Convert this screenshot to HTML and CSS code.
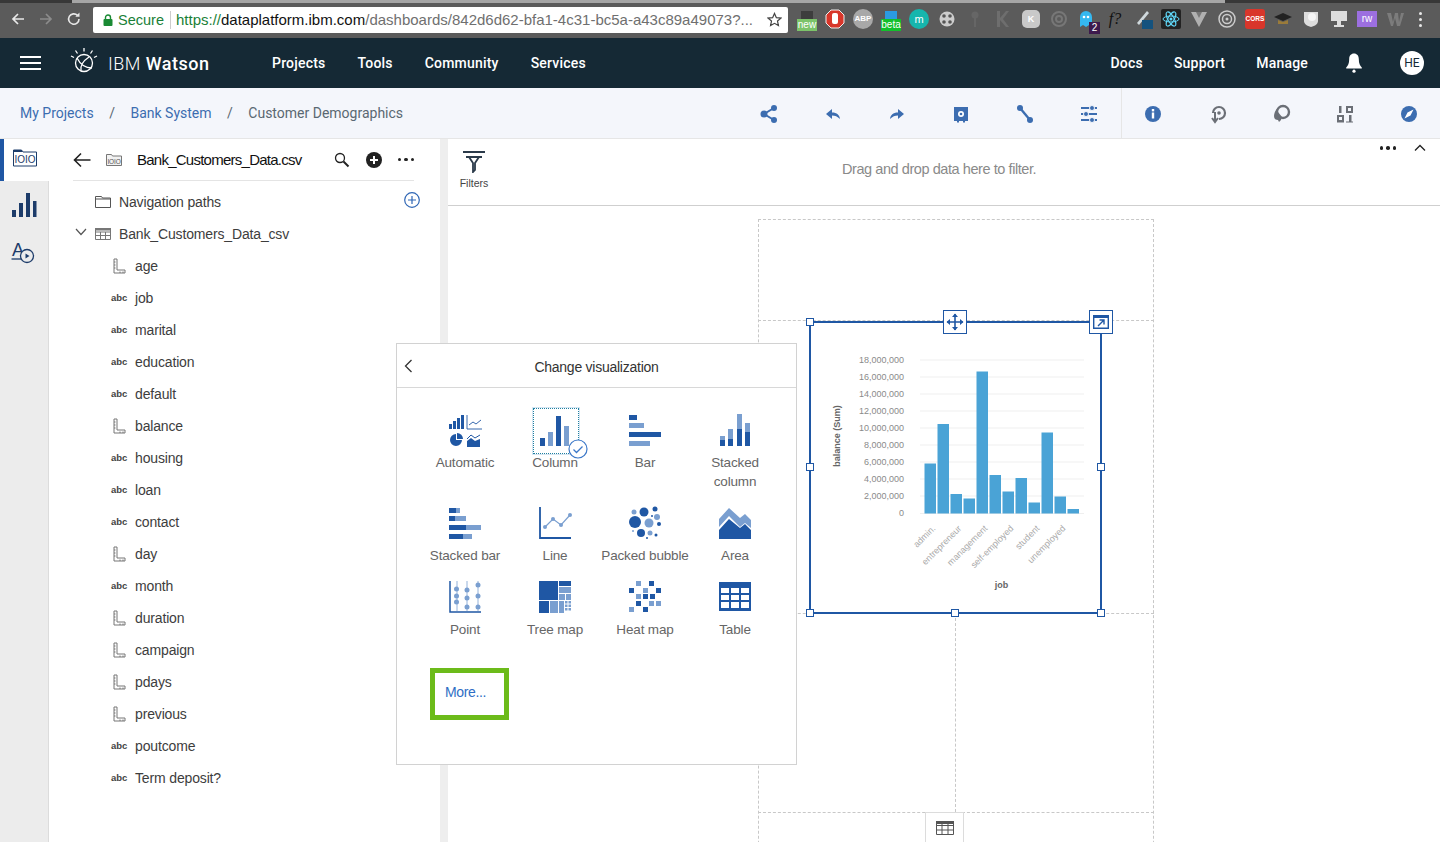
FILE: index.html
```html
<!DOCTYPE html>
<html lang="en">
<head>
    <meta charset="UTF-8">
    <title>Customer Demographics - IBM Watson</title>
    <link rel="stylesheet" href="styles.css">
</head>
<body>
    <svg class="defs" width="0" height="0">
        <symbol id="ruler" viewBox="0 0 14 16">
            <path d="M2 1h3v11h8v3H2z" fill="none" stroke="#777" stroke-width="1"/>
            <path d="M2 4h1.5M2 7h1.5M2 10h1.5M8 15v-1.5M11 15v-1.5" stroke="#777" stroke-width="1"/>
        </symbol>
    </svg>

    <!-- browser chrome -->
    <div class="tabstrip"><div class="tab"></div></div>
    <div class="browser">
        <div class="browser-nav">
            <svg width="16" height="16" viewBox="0 0 16 16"><path d="M14 8H3M8 3 3 8l5 5" fill="none" stroke="#e8e8e8" stroke-width="1.7"/></svg>
            <svg width="16" height="16" viewBox="0 0 16 16"><path d="M2 8h11M8 3l5 5-5 5" fill="none" stroke="#8c8c8c" stroke-width="1.7"/></svg>
            <svg width="16" height="16" viewBox="0 0 16 16"><path d="M13 8a5.2 5.2 0 1 1-1.500-3.600" fill="none" stroke="#e8e8e8" stroke-width="1.6"/><path d="M13.500 1.500v4.200H9.300z" fill="#e8e8e8"/></svg>
        </div>
        <div class="urlbar">
            <svg width="10" height="12" viewBox="0 0 10 12"><rect x="0.5" y="5" width="9" height="7" rx="1" fill="#1a8a34"/><path d="M2.500 5V3.500a2.500 2.500 0 0 1 5 0V5" fill="none" stroke="#1a8a34" stroke-width="1.4"/></svg>
            <span class="secure">Secure</span>
            <span class="url-sep"></span>
            <span class="url"><span class="secure">https://</span><span class="host">dataplatform.ibm.com</span>/dashboards/842d6d62-bfa1-4c31-bc5a-a43c89a49073?...</span>
            <svg class="star" width="15" height="15" viewBox="0 0 16 16"><path d="m8 1.500 2 4.500 4.800.5-3.600 3.200 1 4.800L8 12.100l-4.200 2.400 1-4.800L1.200 6.500 6 6z" fill="none" stroke="#444" stroke-width="1.3"/></svg>
        </div>
        <div class="extensions">
            <span class="ext ext-new">new</span>
            <svg class="ext" viewBox="0 0 20 20"><path d="M6 1h8l5 5v8l-5 5H6l-5-5V6z" fill="#d8362a" stroke="#eee"/><rect x="7" y="4" width="6" height="11" rx="2" fill="#fff"/></svg>
            <span class="ext ext-abp">ABP</span>
            <span class="ext ext-beta">beta</span>
            <span class="ext ext-m">m</span>
            <svg class="ext" viewBox="0 0 20 20"><circle cx="10" cy="10" r="7.5" fill="#ccc"/><circle cx="7" cy="7" r="1.8" fill="#555"/><circle cx="13" cy="7" r="1.8" fill="#555"/><circle cx="7" cy="13" r="1.8" fill="#555"/><circle cx="13" cy="13" r="1.8" fill="#555"/></svg>
            <svg class="ext" viewBox="0 0 20 20"><circle cx="10" cy="6" r="3.5" fill="#666"/><rect x="9" y="8" width="2" height="10" fill="#666"/></svg>
            <svg class="ext" viewBox="0 0 20 20"><path d="M4 2h3v7l6-7h3l-6 8 6 8h-3l-6-7v7H4z" fill="#6e6e6e"/></svg>
            <span class="ext ext-k">K</span>
            <svg class="ext" viewBox="0 0 20 20"><circle cx="10" cy="10" r="7" fill="none" stroke="#777" stroke-width="2"/><circle cx="10" cy="10" r="3" fill="none" stroke="#777" stroke-width="2"/></svg>
            <span class="ext-ghost"><svg class="ext" viewBox="0 0 20 20"><path d="M3 18V8a6 6 0 0 1 12 0v10l-3-2-3 2-3-2z" fill="#35b8f0"/><circle cx="7" cy="8" r="1.3" fill="#fff"/><circle cx="11" cy="8" r="1.3" fill="#fff"/></svg><span class="ghost-count">2</span></span>
            <span class="ext ext-f">f?</span>
            <svg class="ext" viewBox="0 0 20 20"><path d="M14 2 4 14l2 2L16 4z" fill="#cfd8dc"/><rect x="9" y="11" width="11" height="10" fill="#14527e"/></svg>
            <svg class="ext" viewBox="0 0 20 20"><rect width="20" height="20" rx="2" fill="#222"/><g fill="none" stroke="#61dafb"><ellipse cx="10" cy="10" rx="8" ry="3"/><ellipse cx="10" cy="10" rx="8" ry="3" transform="rotate(60 10 10)"/><ellipse cx="10" cy="10" rx="8" ry="3" transform="rotate(120 10 10)"/></g><circle cx="10" cy="10" r="1.5" fill="#61dafb"/></svg>
            <svg class="ext" viewBox="0 0 20 20"><path d="M2 3h16l-8 15z" fill="#b0b0b0"/><path d="M7 3h6l-3 6z" fill="#777"/></svg>
            <svg class="ext" viewBox="0 0 20 20"><circle cx="10" cy="10" r="8" fill="none" stroke="#ccc" stroke-width="1.5"/><circle cx="10" cy="10" r="4.5" fill="none" stroke="#ccc" stroke-width="1.5"/><circle cx="10" cy="10" r="1.5" fill="#ccc"/></svg>
            <span class="ext ext-cors">CORS</span>
            <svg class="ext" viewBox="0 0 20 20"><path d="M1 8l9-4 9 4-9 4z" fill="#222"/><path d="M5 11v4h10v-4l-5 2z" fill="#9a7b3a"/></svg>
            <svg class="ext" viewBox="0 0 20 20"><path d="M3 3h14v9c0 3-3 5-7 6-4-1-7-3-7-6z" fill="#ddd"/><circle cx="11" cy="8" r="4" fill="#f5f5f5"/></svg>
            <svg class="ext" viewBox="0 0 20 20"><rect x="2" y="2" width="16" height="10" fill="#ddd"/><path d="M8 12h4v4h3v2H5v-2h3z" fill="#ddd"/></svg>
            <span class="ext ext-rw">rw</span>
            <svg class="ext" viewBox="0 0 20 20"><path d="M2 4h4l2 9 2-9h3l1 9 2-9h3l-4 13h-3l-2-8-2 8H6z" fill="#7c7c7c"/></svg>
            <span class="chrome-menu"><i></i><i></i><i></i></span>
        </div>
    </div>

    <!-- watson header -->
    <header class="topnav">
        <div class="hamburger"><i></i><i></i><i></i></div>
        <svg class="logo" width="28" height="28" viewBox="0 0 28 28">
            <g fill="none" stroke="#fff" stroke-width="1.3">
                <circle cx="14" cy="16" r="8.5"/>
                <path d="M7 11c3 6 8 10 15 10M11 24c-1-5 2-10 8-14"/>
                <path d="M14 1v3.500M5.500 3.500l2 3M22.500 3.500l-2 3M1 9l3 1.500M27 9l-3 1.500"/>
            </g>
        </svg>
        <div class="brand">IBM <b>Watson</b></div>
        <nav class="nav-main">
            <a>Projects</a>
            <a>Tools</a>
            <a>Community</a>
            <a>Services</a>
        </nav>
        <nav class="nav-right">
            <a>Docs</a>
            <a>Support</a>
            <a>Manage</a>
        </nav>
        <svg class="bell" width="16" height="20" viewBox="0 0 16 20"><path d="M8 .5c-3 0-4.800 2.300-4.800 5.500 0 4.500-1.200 6.500-3 8.500v1h15.600v-1c-1.800-2-3-4-3-8.500C12.800 2.800 11 .5 8 .5z" fill="#fff"/><circle cx="8" cy="18.200" r="1.6" fill="#fff"/></svg>
        <div class="avatar">HE</div>
    </header>

    <!-- breadcrumb and toolbar -->
    <div class="crumbbar">
        <div class="crumbs">
            <a>My Projects</a><span class="slash">/</span><a>Bank System</a><span class="slash">/</span><span>Customer Demographics</span>
        </div>
        <div class="toolbar">
            <svg viewBox="0 0 32 32"><g fill="#3c6db0"><circle cx="11" cy="16" r="3.5"/><circle cx="21" cy="10" r="3"/><circle cx="21" cy="22" r="3"/></g><path d="M21 10 11 16l10 6" fill="none" stroke="#3c6db0" stroke-width="2"/></svg>
            <svg viewBox="0 0 32 32"><path d="M9 16l6-5v3.500c5 0 7.500 2.500 8 6.500-2.500-2.500-5-3.500-8-3.500V21z" fill="#3c6db0"/></svg>
            <svg viewBox="0 0 32 32"><path d="M23 16l-6-5v3.500c-5 0-7.500 2.500-8 6.500 2.500-2.500 5-3.500 8-3.500V21z" fill="#3c6db0"/></svg>
            <svg viewBox="0 0 32 32"><path d="M9 9h14v14h-3v1.500h-2V23h-4v1.500h-2V23H9z" fill="#3c6db0"/><circle cx="16" cy="16" r="3" fill="#fff"/><circle cx="16" cy="16" r="1.3" fill="#3c6db0"/></svg>
            <svg viewBox="0 0 32 32"><path d="M11 10l10 12" stroke="#3c6db0" stroke-width="2.4"/><circle cx="11" cy="10" r="3" fill="#3c6db0"/><circle cx="21" cy="22" r="3" fill="#3c6db0"/></svg>
            <svg viewBox="0 0 32 32"><path d="M8 10h16M8 16h16M8 22h16" stroke="#3c6db0" stroke-width="2"/><g fill="#3c6db0" stroke="#f4f6fb" stroke-width="1"><circle cx="19" cy="10" r="2.5"/><circle cx="13" cy="16" r="2.5"/><circle cx="19" cy="22" r="2.5"/></g></svg>
            <span class="tool-sep"></span>
            <svg viewBox="0 0 32 32"><circle cx="16" cy="16" r="8" fill="#3c6db0"/><rect x="14.800" y="14.500" width="2.400" height="6" fill="#fff"/><rect x="14.800" y="11" width="2.400" height="2.400" fill="#fff"/></svg>
            <svg viewBox="0 0 32 32"><path d="M12 15a6 6 0 1 1 6 6" fill="none" stroke="#6b6f76" stroke-width="2.2"/><circle cx="18" cy="15" r="1.8" fill="#6b6f76"/><path d="M14 14v9M11 20l3 4 3-4" fill="none" stroke="#6b6f76" stroke-width="2"/></svg>
            <svg viewBox="0 0 32 32"><circle cx="18" cy="14" r="6" fill="none" stroke="#6b6f76" stroke-width="2.4"/><path d="M13 10c-3 2-4 6-4 8 0 3 2 4 4 4l1 2 2-2 1-3-4-5z" fill="#6b6f76"/></svg>
            <svg viewBox="0 0 32 32"><rect x="10" y="8" width="2.500" height="7" fill="#6b6f76"/><g fill="none" stroke="#6b6f76" stroke-width="2"><rect x="18" y="9" width="5" height="5"/><rect x="9" y="18" width="5" height="5"/></g><rect x="20" y="17" width="2.500" height="7" fill="#6b6f76"/><path d="M8 24h7M17 24h7" stroke="#6b6f76" stroke-width="1"/></svg>
            <svg viewBox="0 0 32 32"><circle cx="16" cy="16" r="8" fill="#3c6db0"/><path d="M20.500 11.500 17.500 17.500 11.500 20.500 14.500 14.500z" fill="#fff"/></svg>
        </div>
    </div>

    <div class="workspace">
        <aside class="rail">
            <div class="rail-item active">
                <svg width="24" height="18" viewBox="0 0 24 18"><path d="M.5 1h8l1.500 2h13.500v14H.5z" fill="none" stroke="#1d3c6a"/><rect x="0" y="1" width="9" height="2" fill="#1d3c6a"/><text x="12" y="14" class="bits">IOIO</text></svg>
            </div>
            <div class="rail-item">
                <svg width="26" height="26" viewBox="0 0 26 26"><g fill="#1d3c6a"><rect x="1" y="18" width="4" height="7"/><rect x="8" y="11" width="4" height="14"/><rect x="15" y="1" width="4" height="24"/><rect x="22" y="9" width="3.5" height="16"/></g></svg>
            </div>
            <div class="rail-item rail-last">
                <svg width="26" height="24" viewBox="0 0 26 24"><text x="1" y="15" class="rail-a">A</text><path d="M.5 18h13" stroke="#1d3c6a" stroke-width="1.3"/><circle cx="16" cy="15" r="6.500" fill="#ececec" stroke="#1d3c6a" stroke-width="1.3"/><path d="M14.500 12.500v5l4-2.500z" fill="#1d3c6a"/></svg>
            </div>
        </aside>

        <section class="datapanel">
            <div class="panel-head">
                <svg width="18" height="16" viewBox="0 0 18 16"><path d="M17.500 8H1.500M8 1.500 1.500 8 8 14.500" fill="none" stroke="#222" stroke-width="1.6"/></svg>
                <svg class="head-file" width="16" height="12" viewBox="0 0 16 12"><path d="M.5.500h5l1 1.500h9v9.500H.5z" fill="#f2f2f2" stroke="#777"/><text x="8" y="10" class="bits-small">IOIO</text></svg>
                <span class="panel-title">Bank_Customers_Data.csv</span>
                <svg class="head-search" width="16" height="16" viewBox="0 0 16 16"><circle cx="6" cy="6" r="4.500" fill="none" stroke="#222" stroke-width="1.3"/><path d="m9.500 9.500 5 5" stroke="#222" stroke-width="2"/></svg>
                <svg width="16" height="16" viewBox="0 0 16 16"><circle cx="8" cy="8" r="8" fill="#222"/><path d="M8 4v8M4 8h8" stroke="#fff" stroke-width="2"/></svg>
                <span class="dots"><i></i><i></i><i></i></span>
            </div>
            <ul class="tree">
                <li class="tree-top">
                    <svg width="16" height="12" viewBox="0 0 16 12"><path d="M.5.500h6l1 1.500h8v9.500H.5zM.5 3h15" fill="none" stroke="#555"/></svg>
                    <span>Navigation paths</span>
                    <svg class="tree-add" width="16" height="16" viewBox="0 0 16 16"><circle cx="8" cy="8" r="7.300" fill="none" stroke="#2f66b5" stroke-width="1.2"/><path d="M8 4v8M4 8h8" stroke="#2f66b5" stroke-width="1.2"/></svg>
                </li>
                <li class="tree-top">
                    <svg class="tree-caret" width="12" height="8" viewBox="0 0 12 8"><path d="m1 1 5 5.500L11 1" fill="none" stroke="#555" stroke-width="1.2"/></svg>
                    <svg width="16" height="12" viewBox="0 0 16 12"><path d="M.5.500h15v11H.5zM.5 4h15M.5 7.500h15M5.500 4v7.500M10.500 4v7.500" fill="none" stroke="#777"/><rect width="16" height="2.5" fill="#777"/></svg>
                    <span>Bank_Customers_Data_csv</span>
                </li>
                <li><svg class="fld-icon" width="14" height="16"><use href="#ruler"/></svg><span>age</span></li>
                <li><b class="fld-abc">abc</b><span>job</span></li>
                <li><b class="fld-abc">abc</b><span>marital</span></li>
                <li><b class="fld-abc">abc</b><span>education</span></li>
                <li><b class="fld-abc">abc</b><span>default</span></li>
                <li><svg class="fld-icon" width="14" height="16"><use href="#ruler"/></svg><span>balance</span></li>
                <li><b class="fld-abc">abc</b><span>housing</span></li>
                <li><b class="fld-abc">abc</b><span>loan</span></li>
                <li><b class="fld-abc">abc</b><span>contact</span></li>
                <li><svg class="fld-icon" width="14" height="16"><use href="#ruler"/></svg><span>day</span></li>
                <li><b class="fld-abc">abc</b><span>month</span></li>
                <li><svg class="fld-icon" width="14" height="16"><use href="#ruler"/></svg><span>duration</span></li>
                <li><svg class="fld-icon" width="14" height="16"><use href="#ruler"/></svg><span>campaign</span></li>
                <li><svg class="fld-icon" width="14" height="16"><use href="#ruler"/></svg><span>pdays</span></li>
                <li><svg class="fld-icon" width="14" height="16"><use href="#ruler"/></svg><span>previous</span></li>
                <li><b class="fld-abc">abc</b><span>poutcome</span></li>
                <li><b class="fld-abc">abc</b><span>Term deposit?</span></li>
            </ul>
        </section>

        <main class="board">
            <div class="filters">
                <div class="filters-btn">
                    <svg width="24" height="22" viewBox="0 0 24 22"><path d="M1 1h22M4 6h16M7 6l4 6v9l2-2v-7l4-6" fill="none" stroke="#2b3a4a" stroke-width="1.8"/></svg>
                    <span>Filters</span>
                </div>
                <div class="filters-hint">Drag and drop data here to filter.</div>
                <span class="dots filters-dots"><i></i><i></i><i></i></span>
                <svg class="filters-up" width="12" height="8" viewBox="0 0 12 8"><path d="m1 6.500 5-5 5 5" fill="none" stroke="#222" stroke-width="1.3"/></svg>
            </div>
            <div class="canvas">
                <!-- slot guides of the free canvas -->
                <div class="guide guide-outer"></div>
                <div class="guide guide-h1"></div>
                <div class="guide guide-h2"></div>
                <div class="guide guide-h3"></div>
                <div class="guide guide-v"></div>

                <div class="widget">
                    <svg class="chart" width="289" height="289" viewBox="811 323 289 289">
                        <path stroke="#efefef" d="M920 360h164M920 377h164M920 394h164M920 411h164M920 428h164M920 445h164M920 462h164M920 479h164M920 496h164M920 513.500h164"/>
                        <g class="ticks" text-anchor="end">
                            <text x="904" y="363">18,000,000</text>
                            <text x="904" y="380">16,000,000</text>
                            <text x="904" y="397">14,000,000</text>
                            <text x="904" y="414">12,000,000</text>
                            <text x="904" y="431">10,000,000</text>
                            <text x="904" y="448">8,000,000</text>
                            <text x="904" y="465">6,000,000</text>
                            <text x="904" y="482">4,000,000</text>
                            <text x="904" y="499">2,000,000</text>
                            <text x="904" y="516">0</text>
                        </g>
                        <g fill="#4aa3d6">
                            <rect x="924.500" y="463.500" width="11.500" height="50"/>
                            <rect x="937.500" y="424" width="11.500" height="89.500"/>
                            <rect x="950.500" y="494" width="11.500" height="19.500"/>
                            <rect x="963.500" y="498.500" width="11.500" height="15"/>
                            <rect x="976.500" y="371.500" width="11.500" height="142"/>
                            <rect x="989.500" y="475" width="11.500" height="38.500"/>
                            <rect x="1002.500" y="491.500" width="11.500" height="22"/>
                            <rect x="1015.500" y="478" width="11.500" height="35.500"/>
                            <rect x="1028.500" y="502.500" width="11.500" height="11"/>
                            <rect x="1041.500" y="432.500" width="11.500" height="81"/>
                            <rect x="1054.500" y="496.500" width="11.500" height="17"/>
                            <rect x="1067.500" y="509" width="11.500" height="4.500"/>
                        </g>
                        <g class="cats" text-anchor="end">
                            <text transform="translate(936 529) rotate(-45)">admin.</text>
                            <text transform="translate(962 529) rotate(-45)">entrepreneur</text>
                            <text transform="translate(988 529) rotate(-45)">management</text>
                            <text transform="translate(1014 529) rotate(-45)">self-employed</text>
                            <text transform="translate(1040 529) rotate(-45)">student</text>
                            <text transform="translate(1066 529) rotate(-45)">unemployed</text>
                        </g>
                        <text class="axis-title" text-anchor="middle" transform="translate(840 436) rotate(-90)">balance (Sum)</text>
                        <text class="axis-title" text-anchor="middle" x="1001.500" y="588">job</text>
                    </svg>
                    <i class="handle h-tl"></i>
                    <i class="handle h-ml"></i><i class="handle h-mr"></i>
                    <i class="handle h-bl"></i><i class="handle h-bm"></i><i class="handle h-br"></i>
                    <div class="widget-btn btn-move">
                        <svg width="18" height="18" viewBox="0 0 18 18"><path d="M9 1v16M1 9h16" stroke="#1f57a4" stroke-width="1.6"/><path d="m9 .5 3 3.500H6zM9 17.500l3-3.500H6zM.5 9 4 6v6zM17.500 9 14 6v6z" fill="#1f57a4"/></svg>
                    </div>
                    <div class="widget-btn btn-expand">
                        <svg width="16" height="14" viewBox="0 0 16 14"><path d="M.7 1h14.600v12.300H.7z" fill="none" stroke="#1f57a4" stroke-width="1.4"/><rect width="16" height="3" fill="#1f57a4"/><path d="M5 11l6-6M6.500 5H11v4.500" fill="none" stroke="#1f57a4" stroke-width="1.4"/></svg>
                    </div>
                </div>

                <div class="data-tab">
                    <svg width="18" height="14" viewBox="0 0 18 14"><path d="M.5.500h17v13H.5zM.5 4.500h17M.5 9h17M6 .5v13M12 .5v13" fill="none" stroke="#555"/><rect width="18" height="3" fill="#555"/></svg>
                </div>
            </div>
        </main>
    </div>

    <!-- change visualization popover -->
    <div class="vizmenu">
        <div class="vizmenu-head">
            <svg class="vizmenu-back" width="9" height="14" viewBox="0 0 9 14"><path d="M7.500 1 1.500 7l6 6" fill="none" stroke="#333" stroke-width="1.3"/></svg>
            <span>Change visualization</span>
        </div>
        <div class="vizgrid">
            <div class="viz">
                <svg viewBox="0 0 32 32">
                    <g class="d"><rect x="0" y="10" width="3" height="5"/><rect x="4" y="7" width="3" height="8"/><rect x="8" y="4" width="3" height="11"/><rect x="12" y="1" width="3" height="14"/></g>
                    <path d="M18 1v14h15M20 11l4-3 3 2 5-4" fill="none" stroke="#1f57a4" stroke-width="0.9"/>
                    <path class="d" d="M7 20a6 6 0 1 0 6 6H7z"/><path class="d" d="M8 19v6h6a6 6 0 0 0-6-6z"/>
                    <path class="d" d="M18 33v-6l4-3 4 3 5-2v8z"/><path d="M18 25l4-4 4 3 5-3" fill="none" stroke="#1f57a4"/>
                </svg>
                <span>Automatic</span>
            </div>
            <div class="viz viz-selected">
                <svg viewBox="0 0 32 32">
                    <rect class="d" x="1" y="24" width="5" height="8"/><rect class="l" x="9" y="18" width="5" height="14"/>
                    <rect class="d" x="17" y="2" width="5" height="30"/><rect class="l" x="25" y="12" width="5" height="20"/>
                </svg>
                <span>Column</span>
                <svg class="viz-check" width="20" height="20" viewBox="0 0 20 20"><circle cx="10" cy="10" r="9" fill="#fff" stroke="#3c78c8" stroke-width="1.2"/><path d="m5.500 10.500 3 3 6-6" fill="none" stroke="#3c78c8" stroke-width="1.3"/></svg>
            </div>
            <div class="viz">
                <svg viewBox="0 0 32 32">
                    <rect class="d" x="0" y="1" width="8" height="5"/><rect class="l" x="0" y="9" width="15" height="5"/>
                    <rect class="d" x="0" y="18" width="32" height="5"/><rect class="l" x="0" y="27" width="21" height="5"/>
                </svg>
                <span>Bar</span>
            </div>
            <div class="viz">
                <svg viewBox="0 0 32 32">
                    <rect class="l" x="1" y="22" width="5" height="4"/><rect class="d" x="1" y="26" width="5" height="6"/>
                    <rect class="l" x="9" y="15" width="5" height="10"/><rect class="d" x="9" y="25" width="5" height="7"/>
                    <rect class="l" x="18" y="0" width="5" height="15"/><rect class="d" x="18" y="15" width="5" height="17"/>
                    <rect class="l" x="26" y="9" width="5" height="9"/><rect class="d" x="26" y="18" width="5" height="14"/>
                </svg>
                <span>Stacked column</span>
            </div>
            <div class="viz">
                <svg viewBox="0 0 32 32">
                    <rect class="d" x="0" y="1" width="7" height="5"/><rect class="l" x="7" y="1" width="4" height="5"/>
                    <rect class="d" x="0" y="9" width="6" height="5"/><rect class="l" x="6" y="9" width="11" height="5"/>
                    <rect class="d" x="0" y="18" width="17" height="5"/><rect class="l" x="17" y="18" width="15" height="5"/>
                    <rect class="d" x="0" y="27" width="14" height="5"/><rect class="l" x="14" y="27" width="9" height="5"/>
                </svg>
                <span>Stacked bar</span>
            </div>
            <div class="viz">
                <svg viewBox="0 0 32 32">
                    <path d="M1 0v31h31" fill="none" stroke="#1f57a4" stroke-width="1.8"/>
                    <path d="M6 20l8-8 8 6 9-10" fill="none" stroke="#7a9fd0" stroke-width="1.2"/>
                    <g class="l"><circle cx="6" cy="20" r="2"/><circle cx="14" cy="12" r="2"/><circle cx="22" cy="18" r="2"/><circle cx="31" cy="8" r="2"/></g>
                </svg>
                <span>Line</span>
            </div>
            <div class="viz">
                <svg viewBox="0 0 32 32">
                    <g class="d"><circle cx="6" cy="15" r="6"/><circle cx="15" cy="5" r="4.5"/><circle cx="12" cy="26" r="4"/><circle cx="30" cy="17" r="2"/><circle cx="26" cy="2" r="2.5"/><circle cx="27" cy="28" r="1.5"/><circle cx="23" cy="9" r="1"/><circle cx="18" cy="31" r="1"/></g>
                    <g class="l"><circle cx="20" cy="16" r="4.5"/><circle cx="28" cy="10" r="3"/><circle cx="5" cy="5" r="2.5"/><circle cx="21" cy="26" r="2.5"/><circle cx="4" cy="24" r="1"/></g>
                </svg>
                <span>Packed bubble</span>
            </div>
            <div class="viz">
                <svg viewBox="0 0 32 32">
                    <path class="l" d="M0 12 10 1l11 10 5-4 6 6v8l-6-5-5 4L10 9 0 20z"/>
                    <path class="d" d="M0 23 10 12l11 9 5-4 6 6v9H0z"/>
                </svg>
                <span>Area</span>
            </div>
            <div class="viz">
                <svg viewBox="0 0 32 32">
                    <path d="M1 0v31h31" fill="none" stroke="#1f57a4" stroke-width="1.5"/>
                    <path d="M8 0v30M18 0v30M29 0v30" stroke="#7a9fd0" stroke-width="0.8"/>
                    <g class="l"><circle cx="7.500" cy="8" r="2.500"/><circle cx="7.500" cy="15" r="2.500"/><circle cx="7.500" cy="21" r="2.500"/><circle cx="18" cy="9" r="2.500"/><circle cx="18" cy="17" r="2.500"/><circle cx="18" cy="26" r="2.500"/><circle cx="29" cy="4" r="2.500"/><circle cx="29" cy="15" r="2.500"/><circle cx="29" cy="26" r="2.500"/></g>
                </svg>
                <span>Point</span>
            </div>
            <div class="viz">
                <svg viewBox="0 0 32 32">
                    <rect class="d" x="0" y="0" width="19" height="19"/><rect class="d" x="20" y="0" width="12" height="5"/>
                    <rect class="l" x="20" y="6" width="12" height="6"/><rect class="l" x="20" y="13" width="6" height="6"/><rect class="l" x="27" y="13" width="5" height="6"/>
                    <rect class="d" x="0" y="20" width="10" height="12"/><rect class="l" x="11" y="20" width="8" height="12"/>
                    <rect class="l" x="20" y="20" width="5" height="12"/>
                    <g class="l"><rect x="26" y="20" width="2.500" height="2.500"/><rect x="29.500" y="20" width="2.500" height="2.500"/><rect x="26" y="23.500" width="2.500" height="2.500"/><rect x="29.500" y="23.500" width="2.500" height="2.500"/><rect x="26" y="27" width="2.500" height="2.500"/><rect x="29.500" y="27" width="2.500" height="2.500"/></g>
                </svg>
                <span>Tree map</span>
            </div>
            <div class="viz">
                <svg viewBox="0 0 32 32">
                    <g class="l"><rect x="7" y="0" width="5" height="5"/><rect x="14" y="7" width="5" height="5"/><rect x="7" y="13" width="5" height="5"/><rect x="20" y="20" width="5" height="5"/><rect x="27" y="20" width="5" height="5"/><rect x="0" y="26" width="5" height="5"/></g>
                    <g class="d"><rect x="20" y="0" width="5" height="5"/><rect x="0" y="7" width="5" height="5"/><rect x="27" y="7" width="5" height="5"/><rect x="14" y="13" width="5" height="5"/><rect x="21" y="13" width="5" height="5"/><rect x="7" y="20" width="5" height="5"/><rect x="14" y="26" width="5" height="5"/></g>
                </svg>
                <span>Heat map</span>
            </div>
            <div class="viz">
                <svg viewBox="0 0 32 32">
                    <path class="d" fill-rule="evenodd" d="M0 1h32v29H0zM2 7v5h8V7zM12 7v5h8V7zM22 7v5h8V7zM2 14v5h8v-5zM12 14v5h8v-5zM22 14v5h8v-5zM2 21v6h8v-6zM12 21v6h8v-6zM22 21v6h8v-6z"/>
                </svg>
                <span>Table</span>
            </div>
        </div>
        <a class="viz-more">More...</a>
    </div>
</body>
</html>
```

FILE: styles.css
```css
/* General Reset */
* {
    margin: 0;
    padding: 0;
    box-sizing: border-box;
}

html,
body {
    width: 1440px;
    height: 842px;
    overflow: hidden;
}

body {
    position: relative;
    display: flex;
    flex-direction: column;
    font-family: "Liberation Sans", Arial, sans-serif;
    background-color: #ffffff;
    color: #333;
}

ul {
    list-style: none;
}

i {
    display: block;
}

svg {
    display: block;
    flex: none;
}

.defs {
    position: absolute;
}

/* Browser chrome */
.tabstrip {
    height: 3px;
    background-color: #383838;
}

.tab {
    width: 1153px;
    height: 3px;
    margin-left: 72px;
    background-color: #a6a6a6;
}

.browser {
    height: 35px;
    display: flex;
    align-items: center;
    background-color: #5b5b5b;
    padding-bottom: 3px;
}

.browser-nav {
    width: 93px;
    padding-left: 10px;
    display: flex;
    gap: 12px;
}

.urlbar {
    width: 695px;
    height: 26px;
    margin-top: 1px;
    padding-left: 10px;
    display: flex;
    align-items: center;
    background-color: #ffffff;
    border-radius: 2px;
    font-size: 14.5px;
    white-space: nowrap;
    position: relative;
}

.secure {
    color: #1a7f37;
}

.urlbar > .secure {
    margin-left: 5px;
}

.url-sep {
    width: 1px;
    height: 18px;
    margin: 0 5px 0 6px;
    background-color: #ccc;
}

.url {
    font-size: 15px;
    color: #6f6f6f;
}

.host {
    color: #111;
}

.star {
    position: absolute;
    right: 6px;
    top: 5px;
}

.extensions {
    display: flex;
    align-items: center;
    gap: 8px;
    margin-left: 9px;
}

.ext {
    width: 20px;
    height: 20px;
    display: block;
    flex: none;
    font-size: 9px;
    text-align: center;
    line-height: 20px;
    color: #fff;
}

.ext-new,
.ext-beta {
    position: relative;
    height: 12px;
    margin-top: 12px;
    line-height: 12px;
    font-size: 10px;
}

.ext-new {
    background-color: #7cc36a;
}

.ext-beta {
    background-color: #12c02c;
}

.ext-new::before,
.ext-beta::before {
    content: "";
    position: absolute;
    left: 4px;
    top: -8px;
    width: 12px;
    height: 8px;
}

.ext-new::before {
    background-color: #3d3d3d;
}

.ext-beta::before {
    background-color: #2b9be0;
}

.ext-abp {
    border-radius: 50%;
    background-color: #a8a8a8;
    font-size: 8px;
    font-weight: bold;
}

.ext-m {
    border-radius: 50%;
    background-color: #16b6ad;
    font-size: 11px;
}

.ext-k {
    width: 18px;
    height: 18px;
    margin: 0 1px;
    line-height: 18px;
    border-radius: 5px;
    background-color: #c9c9c9;
    font-weight: bold;
}

.ext-ghost {
    position: relative;
    width: 20px;
    height: 20px;
}

.ghost-count {
    position: absolute;
    right: -3px;
    bottom: -5px;
    width: 11px;
    height: 12px;
    line-height: 12px;
    text-align: center;
    font-size: 10px;
    color: #fff;
    background-color: #3d1a4d;
}

.ext-f {
    font-family: "Liberation Serif", serif;
    font-style: italic;
    font-size: 16px;
    color: #111;
}

.ext-cors {
    border-radius: 3px;
    background-color: #d9362b;
    font-size: 6.5px;
    font-weight: bold;
}

.ext-rw {
    height: 16px;
    line-height: 16px;
    background-color: #9c6fe0;
    font-size: 10px;
}

.chrome-menu {
    display: flex;
    flex-direction: column;
    gap: 3px;
    margin-left: 6px;
}

.chrome-menu i {
    width: 3px;
    height: 3px;
    border-radius: 50%;
    background-color: #e8e8e8;
}

/* Watson header */
.topnav {
    height: 50px;
    display: flex;
    align-items: center;
    background-color: #152935;
    color: #ffffff;
    font-family: Roboto, sans-serif;
}

.hamburger {
    width: 21px;
    margin-left: 20px;
    display: flex;
    flex-direction: column;
    gap: 4px;
}

.hamburger i {
    height: 2px;
    background-color: #fff;
}

.logo {
    margin-left: 29px;
    margin-top: -4px;
}

.brand {
    margin-left: 10px;
    width: 164px;
    font-size: 18px;
    font-weight: 300;
    letter-spacing: 0.5px;
}

.brand b {
    font-weight: 500;
}

.nav-main,
.nav-right {
    display: flex;
    gap: 32px;
    font-size: 14px;
    font-weight: 500;
    letter-spacing: 0.2px;
}

.nav-right {
    margin-left: auto;
    gap: 31px;
}

.bell {
    margin-left: 38px;
}

.avatar {
    width: 24px;
    height: 24px;
    margin: 0 16px 0 38px;
    border-radius: 50%;
    background-color: #fff;
    color: #152935;
    font-size: 12px;
    line-height: 24px;
    text-align: center;
}

/* Breadcrumb and toolbar */
.crumbbar {
    height: 51px;
    display: flex;
    align-items: center;
    justify-content: space-between;
    background-color: #f4f6fb;
    border-bottom: 1px solid #e6e6e6;
    font-family: Roboto, sans-serif;
    font-size: 14px;
    color: #5a6872;
}

.crumbs {
    display: flex;
    padding-left: 20px;
}

.crumbs a {
    color: #3c6db0;
}

.slash {
    margin: 0 15.5px;
}

.toolbar {
    display: flex;
    align-items: center;
    gap: 32px;
    margin-top: 2px;
    padding-right: 15px;
}

.toolbar svg {
    width: 32px;
    height: 32px;
}

.tool-sep {
    width: 1px;
    height: 50px;
    margin: -2px -16.5px 0;
    background-color: #e6e6e6;
}

/* Workspace */
.workspace {
    flex: 1;
    display: flex;
    min-height: 0;
}

.rail {
    width: 49px;
    background-color: #ececec;
    border-right: 1px solid #dcdcdc;
}

.rail-item {
    height: 42px;
    display: flex;
    align-items: center;
    justify-content: center;
    margin-top: 3px;
}

.rail-item.active {
    margin-top: 0;
    margin-right: -1px;
    padding: 0 4px 4px 0;
    background-color: #fff;
    border-left: 4px solid #1f57a4;
}

.rail-last {
    margin-top: 6px;
}

.bits {
    font-size: 10px;
    fill: #1d3c6a;
    text-anchor: middle;
}

.bits-small {
    font-size: 6.5px;
    fill: #555;
    text-anchor: middle;
}

.rail-a {
    font-size: 18px;
    fill: #1d3c6a;
}

.datapanel {
    width: 399px;
    padding: 0 26px 0 24px;
    border-right: 8px solid #eeeeee;
    font-size: 14px;
    letter-spacing: -0.15px;
    color: #3d3d3d;
}

.panel-head {
    height: 42px;
    display: flex;
    align-items: center;
    border-bottom: 1px solid #e4e4e4;
}

.head-file {
    margin-left: 15px;
}

.panel-title {
    margin-left: 15px;
    width: 198px;
    font-size: 15px;
    letter-spacing: -0.75px;
    color: #111;
    white-space: nowrap;
}

.head-search {
    margin-right: 16px;
}

.dots {
    display: flex;
    gap: 3px;
    margin-left: 16px;
}

.dots i {
    width: 3.5px;
    height: 3.5px;
    border-radius: 50%;
    background-color: #222;
}

.tree {
    margin-top: 5px;
}

.tree li {
    height: 32px;
    display: flex;
    align-items: center;
    padding-left: 38px;
    white-space: nowrap;
}

.tree li > span {
    margin-left: 8px;
}

.tree .tree-top {
    padding-left: 22px;
    position: relative;
}

.tree-caret {
    position: absolute;
    left: 2px;
    top: 10px;
}

.tree-add {
    position: absolute;
    right: -6px;
    top: 6px;
}

.fld-icon {
    margin: 0 1px;
}

.fld-abc {
    width: 16px;
    font-size: 9.5px;
    letter-spacing: 0;
    color: #444;
    margin-top: -1px;
}

/* Board */
.board {
    flex: 1;
    display: flex;
    flex-direction: column;
}

.filters {
    height: 67px;
    position: relative;
    display: flex;
    border-bottom: 1px solid #cfcfcf;
}

.filters-btn {
    width: 52px;
    margin-top: 12px;
    display: flex;
    flex-direction: column;
    align-items: center;
    font-size: 10.5px;
    color: #444;
}

.filters-btn span {
    margin-top: 4px;
}

.filters-hint {
    flex: 1;
    padding: 22px 0 0 342px;
    font-size: 14.5px;
    letter-spacing: -0.43px;
    color: #8a8a8a;
}

.filters-dots {
    position: absolute;
    right: 44px;
    top: 7px;
}

.filters-up {
    position: absolute;
    right: 14px;
    top: 5px;
}

.canvas {
    flex: 1;
    position: relative;
    overflow: hidden;
}

.guide {
    position: absolute;
    border: 0 dashed #c8c8c8;
}

.guide-outer {
    left: 310px;
    top: 13px;
    width: 396px;
    height: 700px;
    border-width: 1px;
}

.guide-h1,
.guide-h2,
.guide-h3 {
    left: 310px;
    width: 396px;
    border-top-width: 1px;
}

.guide-h1 {
    top: 114px;
}

.guide-h2 {
    top: 407px;
}

.guide-h3 {
    top: 606px;
}

.guide-v {
    left: 507px;
    top: 407px;
    height: 199px;
    border-left-width: 1px;
}

.widget {
    position: absolute;
    left: 361px;
    top: 115px;
    width: 293px;
    height: 293px;
    background-color: #fff;
    border: 2px solid #1f57a4;
}

.ticks {
    font-size: 9px;
    fill: #8a8a8a;
}

.cats {
    font-size: 9px;
    fill: #aaaaaa;
}

.axis-title {
    font-size: 9px;
    font-weight: bold;
    fill: #666;
}

.handle {
    position: absolute;
    width: 8px;
    height: 8px;
    background-color: #fff;
    border: 1px solid #1f57a4;
}

.h-tl { left: -5px; top: -5px; }
.h-ml { left: -5px; top: 140px; }
.h-mr { right: -5px; top: 140px; }
.h-bl { left: -5px; bottom: -5px; }
.h-bm { left: 140px; bottom: -5px; }
.h-br { right: -5px; bottom: -5px; }

.widget-btn {
    position: absolute;
    top: -13px;
    width: 24px;
    height: 24px;
    display: flex;
    align-items: center;
    justify-content: center;
    background-color: #fff;
    border: 1.5px solid #1f57a4;
}

.btn-move {
    left: 132px;
}

.btn-expand {
    right: -13px;
}

.data-tab {
    position: absolute;
    left: 477px;
    bottom: -1px;
    width: 39px;
    height: 31px;
    display: flex;
    align-items: center;
    justify-content: center;
    background-color: #fff;
    border: 1px solid #dcdcdc;
}

/* Change visualization popover */
.vizmenu {
    position: absolute;
    left: 396px;
    top: 343px;
    width: 401px;
    height: 422px;
    background-color: #fff;
    border: 1px solid #d2d2d2;
}

.vizmenu-head {
    height: 44px;
    padding-top: 2px;
    position: relative;
    display: flex;
    align-items: center;
    justify-content: center;
    border-bottom: 1px solid #d8d8d8;
    font-size: 14px;
    letter-spacing: -0.25px;
    color: #333;
}

.vizmenu-back {
    position: absolute;
    left: 7px;
    top: 15px;
}

.vizgrid {
    display: grid;
    grid-template-columns: repeat(4, 90px);
    row-gap: 16px;
    padding: 26px 0 0 23px;
}

.viz {
    position: relative;
    display: flex;
    flex-direction: column;
    align-items: center;
    font-size: 13.5px;
    line-height: 19px;
    letter-spacing: -0.15px;
    text-align: center;
    color: #666;
}

.viz svg:first-child {
    width: 32px;
    height: 32px;
    margin-bottom: 7px;
    overflow: visible;
}

.viz .d {
    fill: #1f57a4;
}

.viz .l {
    fill: #7a9fd0;
}

.viz-selected::before {
    content: "";
    position: absolute;
    left: 23px;
    top: -6px;
    width: 44px;
    height: 44px;
    border: 1px dotted #1f7f9f;
    box-shadow: 0 0 0 1px #d5e6f3;
}

.viz-selected span {
    position: relative;
}

.viz-check {
    position: absolute;
    left: 58px;
    top: 25px;
}

.viz-more {
    display: block;
    width: 79px;
    height: 52px;
    margin: 29px 0 0 33px;
    padding: 11px 0 0 10px;
    border: 5px solid #6cbb1a;
    font-size: 14px;
    letter-spacing: -0.35px;
    color: #2f6ec4;
}
```
